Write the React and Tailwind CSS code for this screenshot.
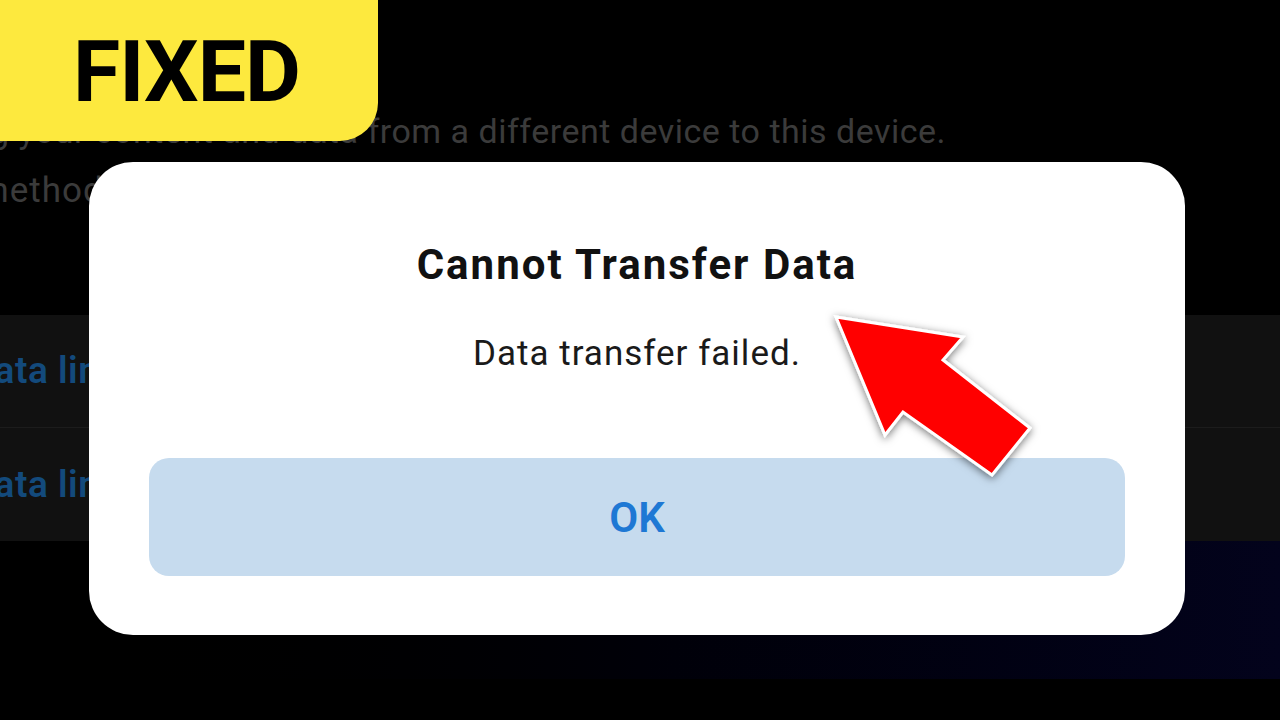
import React from 'react';

// Red pointer arrow with white outline, drawn over the dialog
function PointerArrow() {
  return (
    <svg
      className="absolute left-0 top-0 pointer-events-none"
      width="1280"
      height="720"
      viewBox="0 0 1280 720"
    >
      <defs>
        <filter id="arrowShadow" x="-20%" y="-20%" width="140%" height="140%">
          <feDropShadow dx="0" dy="2" stdDeviation="4" floodColor="#000" floodOpacity="0.55" />
        </filter>
      </defs>
      <polygon
        points="836,317 963,337 943,360 1030,428 992,475 903,412 885,435"
        fill="#ff0000"
        stroke="#ffffff"
        strokeWidth="3"
        strokeLinejoin="miter"
        filter="url(#arrowShadow)"
      />
    </svg>
  );
}

function SettingRow({ label, border }) {
  return (
    <div className={`h-[113px] flex items-center bg-[#111111] ${border ? 'border-b border-[#1c1c1c]' : ''}`}>
      <span className="-ml-[30px] text-[37px] font-semibold text-[#134a7c] tracking-[0.5px] whitespace-nowrap">{label}</span>
    </div>
  );
}

export default function App() {
  return (
    <div
      className="relative w-[1280px] h-[720px] overflow-hidden bg-black"
      style={{ fontFamily: 'Roboto, "Noto Sans", sans-serif' }}
    >
      {/* Smart Switch screen behind the dialog */}
      <div className="flex flex-col">
        <div className="h-[315px] pt-[107px]">
          <div className="w-[946px] flex justify-end">
            <p className="text-[34px] leading-[48px] tracking-[0.5px] text-[#3b3b3b] whitespace-nowrap">
              Bring your content and data from a different device to this device.
            </p>
          </div>
          <p className="-ml-[22px] mt-[12px] text-[35px] leading-[48px] tracking-[1px] text-[#3b3b3b] whitespace-nowrap">
            method
          </p>
        </div>
        <SettingRow label="Data limit" border />
        <SettingRow label="Data limit" />
        <div className="h-[138px] bg-gradient-to-r from-black via-[#000008] to-[#03031c]" />
      </div>

      {/* Yellow label */}
      <div className="absolute left-0 top-0 w-[378px] h-[141px] bg-[#fde93e] rounded-br-[38px] flex items-center pl-[73px] pt-[2px]">
        <span className="text-[86px] font-bold leading-none text-black tracking-[-1px]">FIXED</span>
      </div>

      {/* Error dialog */}
      <div className="absolute left-[89px] top-[162px] w-[1096px] h-[473px] bg-white rounded-[44px] flex flex-col items-center px-[60px]">
        <h2 className="mt-[78px] text-[42px] leading-[50px] font-bold text-[#111] tracking-[2px]">
          Cannot Transfer Data
        </h2>
        <p className="mt-[42px] text-[35px] leading-[44px] tracking-[1px] text-[#1a1a1a]">
          Data transfer failed.
        </p>
        <button className="mt-[82px] w-full h-[118px] rounded-[20px] bg-[#c6dbee] flex items-center justify-center">
          <span className="text-[42px] font-semibold text-[#1e78d4]">OK</span>
        </button>
      </div>

      <PointerArrow />
    </div>
  );
}
